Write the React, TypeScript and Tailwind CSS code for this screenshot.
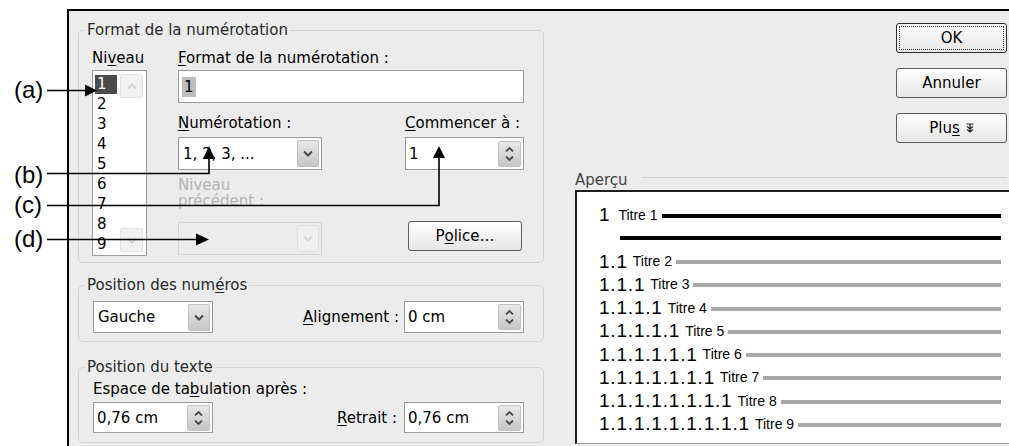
import { Fragment } from 'react';
import clsx from 'clsx';

// numbering levels shown in the list and the preview
const levels = [1, 2, 3, 4, 5, 6, 7, 8, 9];

function DropButton({ disabled }: { disabled?: boolean }) {
  return (
    <div
      className={clsx(
        'flex h-[27px] w-[22px] items-center justify-center rounded-[2px] border',
        disabled
          ? 'border-[#e0e0e0] bg-[#efefef]'
          : 'border-[#c0c0c0] bg-linear-to-b from-[#e8e8e8] to-[#c6c6c6]'
      )}
    >
      <svg width="10" height="7" viewBox="0 0 10 7">
        <path
          d="M1 1.5 L5 5.5 L9 1.5"
          fill="none"
          stroke={disabled ? '#d2d2d2' : '#4a4a4a'}
          strokeWidth="2"
        />
      </svg>
    </div>
  );
}

function SpinButton() {
  return (
    <div className="flex h-[26px] w-[23px] flex-col items-center justify-center gap-[4px] rounded-[2px] border border-[#c0c0c0] bg-linear-to-b from-[#e8e8e8] to-[#c6c6c6]">
      <svg width="9" height="5" viewBox="0 0 9 5">
        <path d="M1 4.5 L4.5 1 L8 4.5" fill="none" stroke="#4a4a4a" strokeWidth="1.8" />
      </svg>
      <svg width="9" height="5" viewBox="0 0 9 5">
        <path d="M1 0.5 L4.5 4 L8 0.5" fill="none" stroke="#4a4a4a" strokeWidth="1.8" />
      </svg>
    </div>
  );
}

function Combo({ value, width, height, disabled }: { value: string; width: string; height: string; disabled?: boolean }) {
  return (
    <div
      className={clsx(
        'flex items-center border pl-[4px] pr-[2px]',
        width,
        height,
        disabled ? 'border-[#d4d4d4] bg-[#ececec]' : 'border-[#9a9a9a] bg-white'
      )}
    >
      <span>{value}</span>
      <div className="ml-auto">
        <DropButton disabled={disabled} />
      </div>
    </div>
  );
}

function Spinner({ value, height }: { value: string; height: string }) {
  return (
    <div className={clsx('flex w-[120px] items-center border border-[#9a9a9a] bg-white pl-[3px] pr-[2px]', height)}>
      <span>{value}</span>
      <div className="ml-auto">
        <SpinButton />
      </div>
    </div>
  );
}

function DialogButton({ children, focused }: { children: React.ReactNode; focused?: boolean }) {
  return (
    <div
      className={clsx(
        'flex h-[30px] w-[111px] items-center justify-center rounded-[3px] border bg-linear-to-b from-[#ffffff] to-[#e6e6e6]',
        focused ? 'border-[#2e2e2e] p-[2px]' : 'border-[#5a5a5a]'
      )}
    >
      {focused ? (
        <div className="flex h-full w-full items-center justify-center border border-dotted border-[#333]">
          {children}
        </div>
      ) : (
        children
      )}
    </div>
  );
}

export default function App() {
  return (
    <div className="relative h-[446px] w-[1009px] overflow-hidden bg-white pl-[67px] pt-[9px]">
      <div className="flex h-[437px] w-[942px] border-l-2 border-t-2 border-black bg-[#ececec] font-['DejaVu_Sans',sans-serif] text-[15px] leading-[18px] text-black">
        {/* ── left: numbering groups ── */}
        <div className="w-[475px] shrink-0 pl-[9px] pt-[10px]">
          <fieldset className="w-[466px] rounded-[5px] border border-[#d2d2d2]">
            <legend className="ml-[6px] px-[2px] text-[#2a2a2a]">Format de la numérotation</legend>
            <div className="flex pb-[6px] pl-[13px] pr-[19px] pt-[10px]">
              {/* level list */}
              <div className="w-[55px]">
                <div>
                  Ni<span className="underline underline-offset-2">v</span>eau
                </div>
                <div className="mt-[3px] flex h-[186px] w-[55px] border border-[#9c9c9c] bg-white p-[2px]">
                  <div className="w-[24px] pt-[1px]">
                    {levels.map((n) => (
                      <div key={n} className="flex h-[20px] items-center">
                        <span
                          className={clsx(
                            'flex h-[19px] w-[22px] items-center pl-[2px]',
                            n === 1 && 'bg-[#4b4b4b] text-white'
                          )}
                        >
                          {n}
                        </span>
                      </div>
                    ))}
                  </div>
                  <div className="ml-[1px] flex w-[23px] flex-col justify-between pb-[1px] pt-[1px]">
                    <div className="flex h-[24px] items-center justify-center rounded-[2px] border border-[#e2e2e2] bg-[#f1f1f1]">
                      <svg width="10" height="7" viewBox="0 0 10 7">
                        <path d="M1 5.5 L5 1.5 L9 5.5" fill="none" stroke="#cfcfcf" strokeWidth="2" />
                      </svg>
                    </div>
                    <div className="flex h-[24px] items-center justify-center rounded-[2px] border border-[#e2e2e2] bg-[#f1f1f1]">
                      <svg width="10" height="7" viewBox="0 0 10 7">
                        <path d="M1 1.5 L5 5.5 L9 1.5" fill="none" stroke="#cfcfcf" strokeWidth="2" />
                      </svg>
                    </div>
                  </div>
                </div>
              </div>

              {/* format fields */}
              <div className="ml-[31px] flex-1">
                <div>
                  <span className="underline underline-offset-2">F</span>ormat de la numérotation :
                </div>
                <div className="mt-[3px] flex h-[33px] items-center border border-[#9a9a9a] bg-white pl-[3px]">
                  <span className="flex h-[20px] items-center bg-[#bdbdbd] px-[2px]">1</span>
                </div>
                <div className="mt-[11px] flex justify-between">
                  <div className="w-[144px]">
                    <div>
                      <span className="underline underline-offset-2">N</span>umérotation :
                    </div>
                    <div className="mt-[5px]">
                      <Combo value="1, 2, 3, ..." width="w-[144px]" height="h-[33px]" />
                    </div>
                    <div className="mt-[7px] leading-[16px] text-[#b2b2b2]">
                      <div>Niveau</div>
                      <div>précédent :</div>
                    </div>
                    <div className="mt-[13px]">
                      <Combo value="" width="w-[144px]" height="h-[33px]" disabled />
                    </div>
                  </div>
                  <div className="w-[119px]">
                    <div>
                      <span className="underline underline-offset-2">C</span>ommencer à :
                    </div>
                    <div className="mt-[5px] flex h-[33px] w-[119px] items-center border border-[#9a9a9a] bg-white pl-[3px] pr-[2px]">
                      <span>1</span>
                      <div className="ml-auto">
                        <SpinButton />
                      </div>
                    </div>
                    <div className="ml-[3px] mt-[51px] flex h-[30px] w-[114px] items-center justify-center rounded-[3px] border border-[#5a5a5a] bg-linear-to-b from-[#ffffff] to-[#e6e6e6]">
                      P<span className="underline underline-offset-2">o</span>lice…
                    </div>
                  </div>
                </div>
              </div>
            </div>
          </fieldset>

          <fieldset className="mt-[13px] w-[466px] rounded-[5px] border border-[#d2d2d2]">
            <legend className="ml-[6px] px-[2px] text-[#2a2a2a]">
              Position des num<span className="underline underline-offset-2">é</span>ros
            </legend>
            <div className="flex items-center pb-[8px] pl-[14px] pr-[19px] pt-[7px]">
              <Combo value="Gauche" width="w-[120px]" height="h-[32px]" />
              <span className="ml-auto mr-[5px]">
                <span className="underline underline-offset-2">A</span>lignement :
              </span>
              <Spinner value="0 cm" height="h-[32px]" />
            </div>
          </fieldset>

          <fieldset className="mt-[16px] w-[466px] rounded-[5px] border border-[#d2d2d2]">
            <legend className="ml-[6px] px-[2px] text-[#2a2a2a]">Position du texte</legend>
            <div className="pb-[9px] pl-[14px] pr-[19px] pt-[4px]">
              <div>
                Espace de ta<span className="underline underline-offset-2">b</span>ulation après :
              </div>
              <div className="mt-[4px] flex items-center">
                <Spinner value="0,76 cm" height="h-[31px]" />
                <span className="ml-auto mr-[7px]">
                  <span className="underline underline-offset-2">R</span>etrait :
                </span>
                <Spinner value="0,76 cm" height="h-[31px]" />
              </div>
            </div>
          </fieldset>
        </div>

        {/* ── right: buttons and preview ── */}
        <div className="flex min-w-0 flex-1 flex-col pl-[31px] pr-[2px] pt-[12px]">
          <div className="flex flex-col items-end gap-[15px]">
            <DialogButton focused>OK</DialogButton>
            <DialogButton>Annuler</DialogButton>
            <DialogButton>
              <span className="flex items-center">
                Plu<span className="underline underline-offset-2">s</span>
                <svg className="ml-[6px]" width="8" height="10" viewBox="0 0 8 10">
                  <path
                    d="M0.5 1 H7.5 M4 1 V9.5 M1.2 3.5 L4 6 L6.8 3.5 M1.2 6.5 L4 9 L6.8 6.5"
                    fill="none"
                    stroke="#222"
                    strokeWidth="1.2"
                  />
                </svg>
              </span>
            </DialogButton>
          </div>

          <div className="mt-[28px] flex h-[18px] items-center">
            <span className="text-[#444]">Aperçu</span>
            <div className="mb-[5px] ml-[14px] h-px flex-1 bg-[#d0d0d0]" />
          </div>
          <div className="mt-[1px] h-[254px] w-[450px] shrink-0 border-b border-l-2 border-t-2 border-b-[#9a9a9a] border-l-[#1e1e1e] border-t-[#1e1e1e] bg-white pl-[22px] pt-[11px] font-['Liberation_Sans',Arial,sans-serif]">
            <div className="w-[402px]">
              {levels.map((n) => (
                <Fragment key={n}>
                  <div className="flex h-[23.25px] items-center">
                    <span className="text-[19px] leading-none tracking-[0.8px]">
                      {Array(n).fill('1').join('.')}
                    </span>
                    <span className={clsx('text-[14px] leading-none', n === 1 ? 'ml-[8px]' : 'ml-[5px]')}>
                      Titre {n}
                    </span>
                    <div className={clsx('ml-[4px] mt-[2px] h-[4px] flex-1', n === 1 ? 'bg-black' : 'bg-[#a8a8a8]')} />
                  </div>
                  {n === 1 && (
                    <div className="flex h-[23.25px] items-center pl-[21px]">
                      <div className="h-[4px] flex-1 bg-black" />
                    </div>
                  )}
                </Fragment>
              ))}
            </div>
          </div>
        </div>
      </div>

      {/* callout labels and arrows */}
      <div className="pointer-events-none absolute inset-0 font-['Liberation_Sans',Arial,sans-serif] text-[24px] leading-none text-black">
        <span className="absolute left-[14px] top-[78px]">(a)</span>
        <span className="absolute left-[14px] top-[163px]">(b)</span>
        <span className="absolute left-[14px] top-[193px]">(c)</span>
        <span className="absolute left-[14px] top-[227px]">(d)</span>
        <svg className="absolute left-0 top-0" width="1009" height="446" viewBox="0 0 1009 446">
          <g stroke="#000" strokeWidth="1.6" fill="none">
            <path d="M47 90.5 H87" />
            <path d="M47 173.5 H209 V158" />
            <path d="M47 205.5 H439 V157" />
            <path d="M47 239.5 H197" />
          </g>
          <g fill="#000">
            <path d="M97 90.5 L85 84.5 L85 96.5 Z" />
            <path d="M209 146 L203 159 L215 159 Z" />
            <path d="M439 146 L433 158 L445 158 Z" />
            <path d="M209 239.5 L196 233.5 L196 245.5 Z" />
          </g>
        </svg>
      </div>
    </div>
  );
}
